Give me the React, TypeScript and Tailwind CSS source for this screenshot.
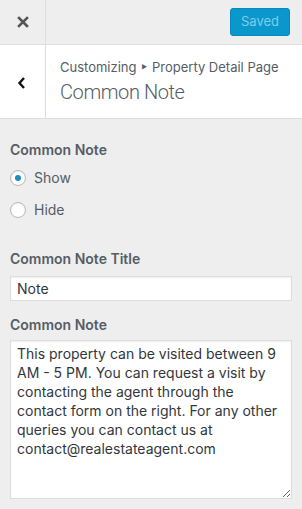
import React from "react";

export default function App() {
  const note =
    "This property can be visited between 9 AM - 5 PM. You can request a visit by contacting the agent through the contact form on the right. For any other queries you can contact us at contact@realestateagent.com";
  return (
    <div
      className="w-[302px] h-[509px] bg-[#eeeeee] overflow-hidden text-[#555d66]"
      style={{ fontFamily: "Inter, 'Noto Sans', sans-serif" }}
    >
      {/* top bar */}
      <div className="flex h-[45px] border-b border-[#dddddd]">
        <div className="w-[46px] shrink-0 border-r border-[#dddddd] flex items-center justify-center">
          <svg width="12" height="12" viewBox="0 0 12 12">
            <path d="M2 2 L10 10 M10 2 L2 10" stroke="#555" strokeWidth="2.6" strokeLinecap="square" />
          </svg>
        </div>
        <div className="flex-1 flex items-center justify-end pr-[12px]">
          <button className="h-[28px] w-[60px] rounded-[3px] bg-[#0a97cc] border border-[#0689bb] text-[#7fcde9] text-[13px] leading-none pb-[1px]">
            Saved
          </button>
        </div>
      </div>

      {/* section header */}
      <div className="flex h-[74px] bg-white border-b border-[#dddddd]">
        <div className="w-[46px] shrink-0 border-r border-[#dddddd] flex items-center justify-center">
          <svg width="10" height="14" viewBox="0 0 10 14" className="mt-[2px] mr-[2px]">
            <path d="M7 2 L2.5 7 L7 12" fill="none" stroke="#111" strokeWidth="2.4" />
          </svg>
        </div>
        <div className="flex-1 flex flex-col justify-center pl-[14px] pb-[1px]">
          <div className="text-[13px] leading-[18px] text-[#555d66] flex items-center">
            <span>Customizing</span>
            <span className="text-[6px] mx-[5px]">▶</span>
            <span>Property Detail Page</span>
          </div>
          <div
            className="mt-[3px] text-[20px] leading-[26px] font-light text-[#555d66] tracking-[-0.4px]"
            style={{ fontFamily: "Roboto, 'Noto Sans', sans-serif" }}
          >
            Common Note
          </div>
        </div>
      </div>

      {/* controls */}
      <div className="px-[10px] pt-[22px]">
        <div className="text-[14px] font-semibold leading-[18px]">Common Note</div>
        <div className="mt-[11px] flex flex-col gap-[16px]">
          <label className="flex items-center gap-[8px] text-[14px] leading-[16px]">
            <span className="w-[16px] h-[16px] rounded-full border border-[#b4b9be] bg-white flex items-center justify-center shadow-[inset_0_1px_2px_rgba(0,0,0,0.07)]">
              <span className="w-[6px] h-[6px] rounded-full bg-[#1e8cbe]" />
            </span>
            Show
          </label>
          <label className="flex items-center gap-[8px] text-[14px] leading-[16px]">
            <span className="w-[16px] h-[16px] rounded-full border border-[#b4b9be] bg-white shadow-[inset_0_1px_2px_rgba(0,0,0,0.07)]" />
            Hide
          </label>
        </div>

        <div className="mt-[32px] text-[14px] font-semibold leading-[18px]">Common Note Title</div>
        <div className="mt-[8px] h-[25px] w-[282px] bg-white border border-[#dddddd] shadow-[inset_0_1px_2px_rgba(0,0,0,0.07)] flex items-center px-[6px] text-[14px] text-[#32373c]">
          Note
        </div>

        <div className="mt-[15px] text-[14px] font-semibold leading-[18px]">Common Note</div>
        <textarea
          readOnly
          value={note}
          className="mt-[6px] block w-[282px] h-[159px] bg-white border border-[#dddddd] shadow-[inset_0_1px_2px_rgba(0,0,0,0.07)] px-[6px] pt-[3px] text-[14px] leading-[19px] text-[#32373c] resize-y outline-none"
          style={{ fontFamily: "Inter, 'Noto Sans', sans-serif" }}
        />
      </div>
    </div>
  );
}
